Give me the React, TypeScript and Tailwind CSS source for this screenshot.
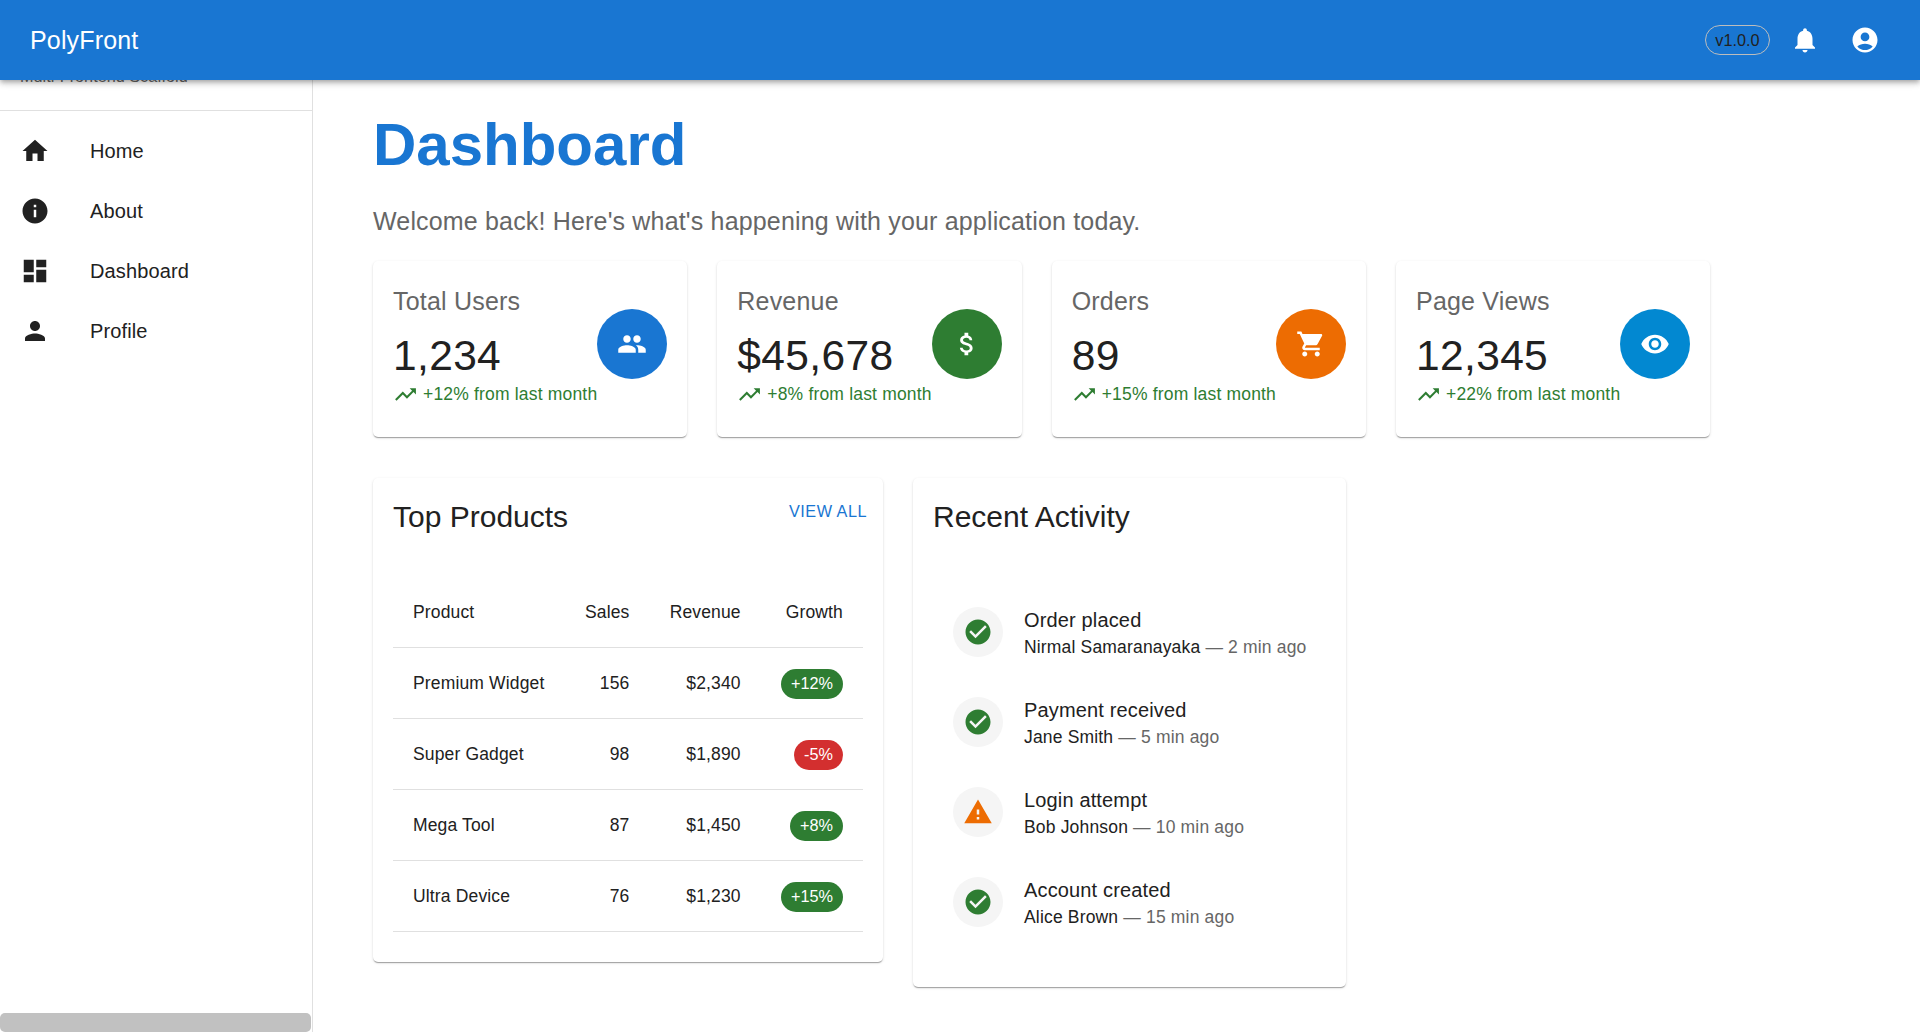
import React from "react";

const P: Record<string, string> = {
  home: "M10 20v-6h4v6h5v-8h3L12 3 2 12h3v8z",
  info: "M12 2C6.48 2 2 6.48 2 12s4.48 10 10 10 10-4.48 10-10S17.52 2 12 2m1 15h-2v-6h2zm0-8h-2V7h2z",
  dashboard: "M3 13h8V3H3zm0 8h8v-6H3zm10 0h8V11h-8zm0-18v6h8V3z",
  person: "M12 12c2.21 0 4-1.79 4-4s-1.79-4-4-4-4 1.79-4 4 1.79 4 4 4m0 2c-2.67 0-8 1.34-8 4v2h16v-2c0-2.66-5.33-4-8-4",
  bell: "M12 22c1.1 0 2-.9 2-2h-4c0 1.1.89 2 2 2m6-6v-5c0-3.07-1.64-5.64-4.5-6.32V4c0-.83-.67-1.5-1.5-1.5s-1.5.67-1.5 1.5v.68C7.63 5.36 6 7.92 6 11v5l-2 2v1h16v-1z",
  account: "M12 2C6.48 2 2 6.48 2 12s4.48 10 10 10 10-4.48 10-10S17.52 2 12 2m0 4c1.93 0 3.5 1.57 3.5 3.5S13.93 13 12 13s-3.5-1.57-3.5-3.5S10.07 6 12 6m0 14c-2.03 0-4.43-.82-6.14-2.88C7.55 15.8 9.68 15 12 15s4.45.8 6.14 2.12C16.43 19.18 14.03 20 12 20",
  people: "M16 11c1.66 0 2.99-1.34 2.99-3S17.66 5 16 5s-3 1.34-3 3 1.34 3 3 3m-8 0c1.66 0 2.99-1.34 2.99-3S9.66 5 8 5 5 6.34 5 8s1.34 3 3 3m0 2c-2.33 0-7 1.17-7 3.5V19h14v-2.5c0-2.33-4.67-3.5-7-3.5m8 0c-.29 0-.62.02-.97.05 1.16.84 1.97 1.97 1.97 3.45V19h6v-2.5c0-2.33-4.67-3.5-7-3.5",
  money: "M11.8 10.9c-2.27-.59-3-1.2-3-2.15 0-1.09 1.01-1.85 2.7-1.85 1.78 0 2.44.85 2.5 2.1h2.21c-.07-1.72-1.12-3.3-3.21-3.81V3h-3v2.16c-1.94.42-3.5 1.68-3.5 3.61 0 2.31 1.91 3.46 4.7 4.13 2.5.6 3 1.48 3 2.41 0 .69-.49 1.79-2.7 1.79-2.06 0-2.87-.92-2.98-2.1h-2.2c.12 2.19 1.76 3.42 3.68 3.83V21h3v-2.15c1.95-.37 3.5-1.5 3.5-3.55 0-2.84-2.43-3.81-4.7-4.4",
  cart: "M7 18c-1.1 0-1.99.9-1.99 2S5.9 22 7 22s2-.9 2-2-.9-2-2-2M1 2v2h2l3.6 7.59-1.35 2.45c-.16.28-.25.61-.25.96 0 1.1.9 2 2 2h12v-2H7.42c-.14 0-.25-.11-.25-.25l.03-.12.9-1.63h7.45c.75 0 1.41-.41 1.75-1.03l3.58-6.49c.08-.14.12-.31.12-.48 0-.55-.45-1-1-1H5.21l-.94-2zm16 16c-1.1 0-1.99.9-1.99 2s.89 2 1.99 2 2-.9 2-2-.9-2-2-2",
  eye: "M12 4.5C7 4.5 2.73 7.61 1 12c1.73 4.39 6 7.5 11 7.5s9.27-3.11 11-7.5c-1.73-4.39-6-7.5-11-7.5M12 17c-2.76 0-5-2.24-5-5s2.24-5 5-5 5 2.24 5 5-2.24 5-5 5m0-8c-1.66 0-3 1.34-3 3s1.34 3 3 3 3-1.34 3-3-1.34-3-3-3",
  trend: "m16 6 2.29 2.29-4.88 4.88-4-4L2 16.59 3.41 18l6-6 4 4 6.3-6.29L22 12V6z",
  check: "M12 2C6.48 2 2 6.48 2 12s4.48 10 10 10 10-4.48 10-10S17.52 2 12 2m-2 15-5-5 1.41-1.41L10 14.17l7.59-7.59L19 8z",
  warning: "M1 21h22L12 2zm12-3h-2v-2h2zm0-4h-2v-4h2z",
};

function Icon({ name, className }: { name: string; className: string }) {
  return (
    <svg viewBox="0 0 24 24" fill="currentColor" className={className}>
      <path d={P[name]} />
    </svg>
  );
}

const nav = [
  ["home", "Home"],
  ["info", "About"],
  ["dashboard", "Dashboard"],
  ["person", "Profile"],
];

const stats = [
  { label: "Total Users", value: "1,234", trend: "+12% from last month", icon: "people", bg: "bg-[#1976d2]" },
  { label: "Revenue", value: "$45,678", trend: "+8% from last month", icon: "money", bg: "bg-[#2e7d32]" },
  { label: "Orders", value: "89", trend: "+15% from last month", icon: "cart", bg: "bg-[#ed6c02]" },
  { label: "Page Views", value: "12,345", trend: "+22% from last month", icon: "eye", bg: "bg-[#0288d1]" },
];

const products = [
  ["Premium Widget", "156", "$2,340", "+12%"],
  ["Super Gadget", "98", "$1,890", "-5%"],
  ["Mega Tool", "87", "$1,450", "+8%"],
  ["Ultra Device", "76", "$1,230", "+15%"],
];

const activity = [
  ["Order placed", "Nirmal Samaranayaka", "2 min ago", "check"],
  ["Payment received", "Jane Smith", "5 min ago", "check"],
  ["Login attempt", "Bob Johnson", "10 min ago", "warning"],
  ["Account created", "Alice Brown", "15 min ago", "check"],
];

const cardClass =
  "bg-white rounded-[5px] shadow-[0_2px_1px_-1px_rgba(0,0,0,0.2),0_1px_1px_0_rgba(0,0,0,0.14),0_1px_3px_0_rgba(0,0,0,0.12)]";

export default function App() {
  return (
    <div className="h-[1032px] overflow-hidden bg-white text-[#212121] font-['Liberation_Sans',Arial,sans-serif]">
      <header className="relative z-10 h-20 bg-[#1976d2] flex items-center pl-[30px] pr-[25px] shadow-[0_2px_4px_-1px_rgba(0,0,0,0.2),0_4px_5px_0_rgba(0,0,0,0.14),0_1px_10px_0_rgba(0,0,0,0.12)]">
        <div className="text-[25px] leading-[40px] tracking-[0.15px] text-white flex-1">PolyFront</div>
        <div className="h-[30px] w-[65px] rounded-full border border-[#bdbdbd] flex items-center justify-center text-[16.25px] text-[#212121]">
          v1.0.0
        </div>
        <div className="w-[60px] h-[60px] ml-[5px] flex items-center justify-center text-white">
          <Icon name="bell" className="w-[30px] h-[30px]" />
        </div>
        <div className="w-[60px] h-[60px] flex items-center justify-center text-white">
          <Icon name="account" className="w-[30px] h-[30px]" />
        </div>
      </header>
      <div className="flex h-[952px]">
        <aside className="w-[313px] shrink-0 border-r border-[#e0e0e0] flex flex-col">
          <div className="-mt-[17px] h-[48px] pl-[20px] text-[16.25px] leading-[27px] text-[#666666] border-b border-[#e0e0e0]">
            Multi-Frontend Scaffold
          </div>
          <nav className="pt-[10px]">
            {nav.map(([icon, label]) => (
              <div key={label} className="h-[60px] flex items-center pl-[20px]">
                <div className="w-[70px] shrink-0">
                  <Icon name={icon} className="w-[30px] h-[30px]" />
                </div>
                <span className="text-[20px] leading-[30px] tracking-[0.12px]">{label}</span>
              </div>
            ))}
          </nav>
          <div className="mt-auto h-[19px] w-[311px] rounded-[5px] bg-[#c1c1c1]" />
        </aside>
        <main className="flex-1 pl-[60px] pt-[30px]">
          <h1 className="text-[60px] leading-[70px] font-bold text-[#1976d2]">Dashboard</h1>
          <p className="mt-[21px] mb-[20px] text-[25px] leading-[40px] tracking-[0.17px] text-[#666666]">
            Welcome back! Here's what's happening with your application today.
          </p>
          <section className="flex gap-[30px]">
            {stats.map((s) => (
              <div key={s.label} className={`${cardClass} p-[20px] pb-[30px] flex items-center`}>
                <div>
                  <div className="text-[25px] leading-[40px] tracking-[0.2px] text-[#666666] mb-[9px]">{s.label}</div>
                  <div className="text-[42.5px] leading-[52px] tracking-[0.35px] text-[#212121]">{s.value}</div>
                  <div className="flex items-center h-[25px] text-[17.5px] tracking-[0.18px] text-[#2e7d32]">
                    <Icon name="trend" className="w-[25px] h-[25px] mr-[5px]" />
                    {s.trend}
                  </div>
                </div>
                <div className={`${s.bg} w-[70px] h-[70px] rounded-full flex items-center justify-center text-white shrink-0`}>
                  <Icon name={s.icon} className="w-[30px] h-[30px]" />
                </div>
              </div>
            ))}
          </section>
          <section className="flex items-start gap-[30px] mt-[41px]">
            <div className={`${cardClass} p-[20px] pb-[30px]`}>
              <div className="flex justify-between h-[78px]">
                <h2 className="text-[30px] leading-[38px] text-[#212121]">Top Products</h2>
                <span className="text-[16.25px] leading-[26px] tracking-[0.5px] text-[#1976d2] -mr-[4px]">VIEW ALL</span>
              </div>
              <table className="w-[470px] text-[17.5px] tracking-[0.15px] text-[#212121] border-collapse">
                <thead>
                  <tr className="h-[71px] border-b border-[#e0e0e0]">
                    <th className="px-[20px] pt-[2px] font-normal text-left">Product</th>
                    <th className="px-[20px] pt-[2px] font-normal text-right">Sales</th>
                    <th className="px-[20px] pt-[2px] font-normal text-right">Revenue</th>
                    <th className="px-[20px] pt-[2px] font-normal text-right">Growth</th>
                  </tr>
                </thead>
                <tbody>
                  {products.map(([name, sales, rev, growth]) => (
                    <tr key={name} className="h-[71px] border-b border-[#e0e0e0]">
                      <td className="px-[20px] pt-[2px] whitespace-nowrap">{name}</td>
                      <td className="px-[20px] pt-[2px] text-right">{sales}</td>
                      <td className="px-[20px] pt-[2px] text-right">{rev}</td>
                      <td className="px-[20px] pt-[2px] text-right">
                        <span
                          className={`inline-flex items-center h-[30px] px-[10px] rounded-full text-[16.25px] tracking-normal text-white align-middle ${
                            growth.startsWith("-") ? "bg-[#d32f2f]" : "bg-[#2e7d32]"
                          }`}
                        >
                          {growth}
                        </span>
                      </td>
                    </tr>
                  ))}
                </tbody>
              </table>
            </div>
            <div className={`${cardClass} p-[20px] pb-[30px]`}>
              <h2 className="text-[30px] leading-[38px] h-[79px] text-[#212121]">Recent Activity</h2>
              <div className="py-[10px]">
                {activity.map(([title, who, time, icon]) => (
                  <div key={title} className="h-[90px] flex items-center pl-[20px] pr-[20px]">
                    <div className="w-[50px] h-[50px] rounded-full bg-[#f5f5f5] flex items-center justify-center mr-[21px] shrink-0">
                      <Icon
                        name={icon}
                        className={`w-[30px] h-[30px] ${icon === "warning" ? "text-[#ed6c02]" : "text-[#2e7d32]"}`}
                      />
                    </div>
                    <div>
                      <div className="text-[20px] leading-[30px] tracking-[0.15px] text-[#212121]">{title}</div>
                      <div className="text-[17.5px] leading-[25px] tracking-[0.17px] text-[#666666] whitespace-nowrap">
                        <span className="text-[#212121]">{who}</span> — {time}
                      </div>
                    </div>
                  </div>
                ))}
              </div>
            </div>
          </section>
        </main>
      </div>
    </div>
  );
}
